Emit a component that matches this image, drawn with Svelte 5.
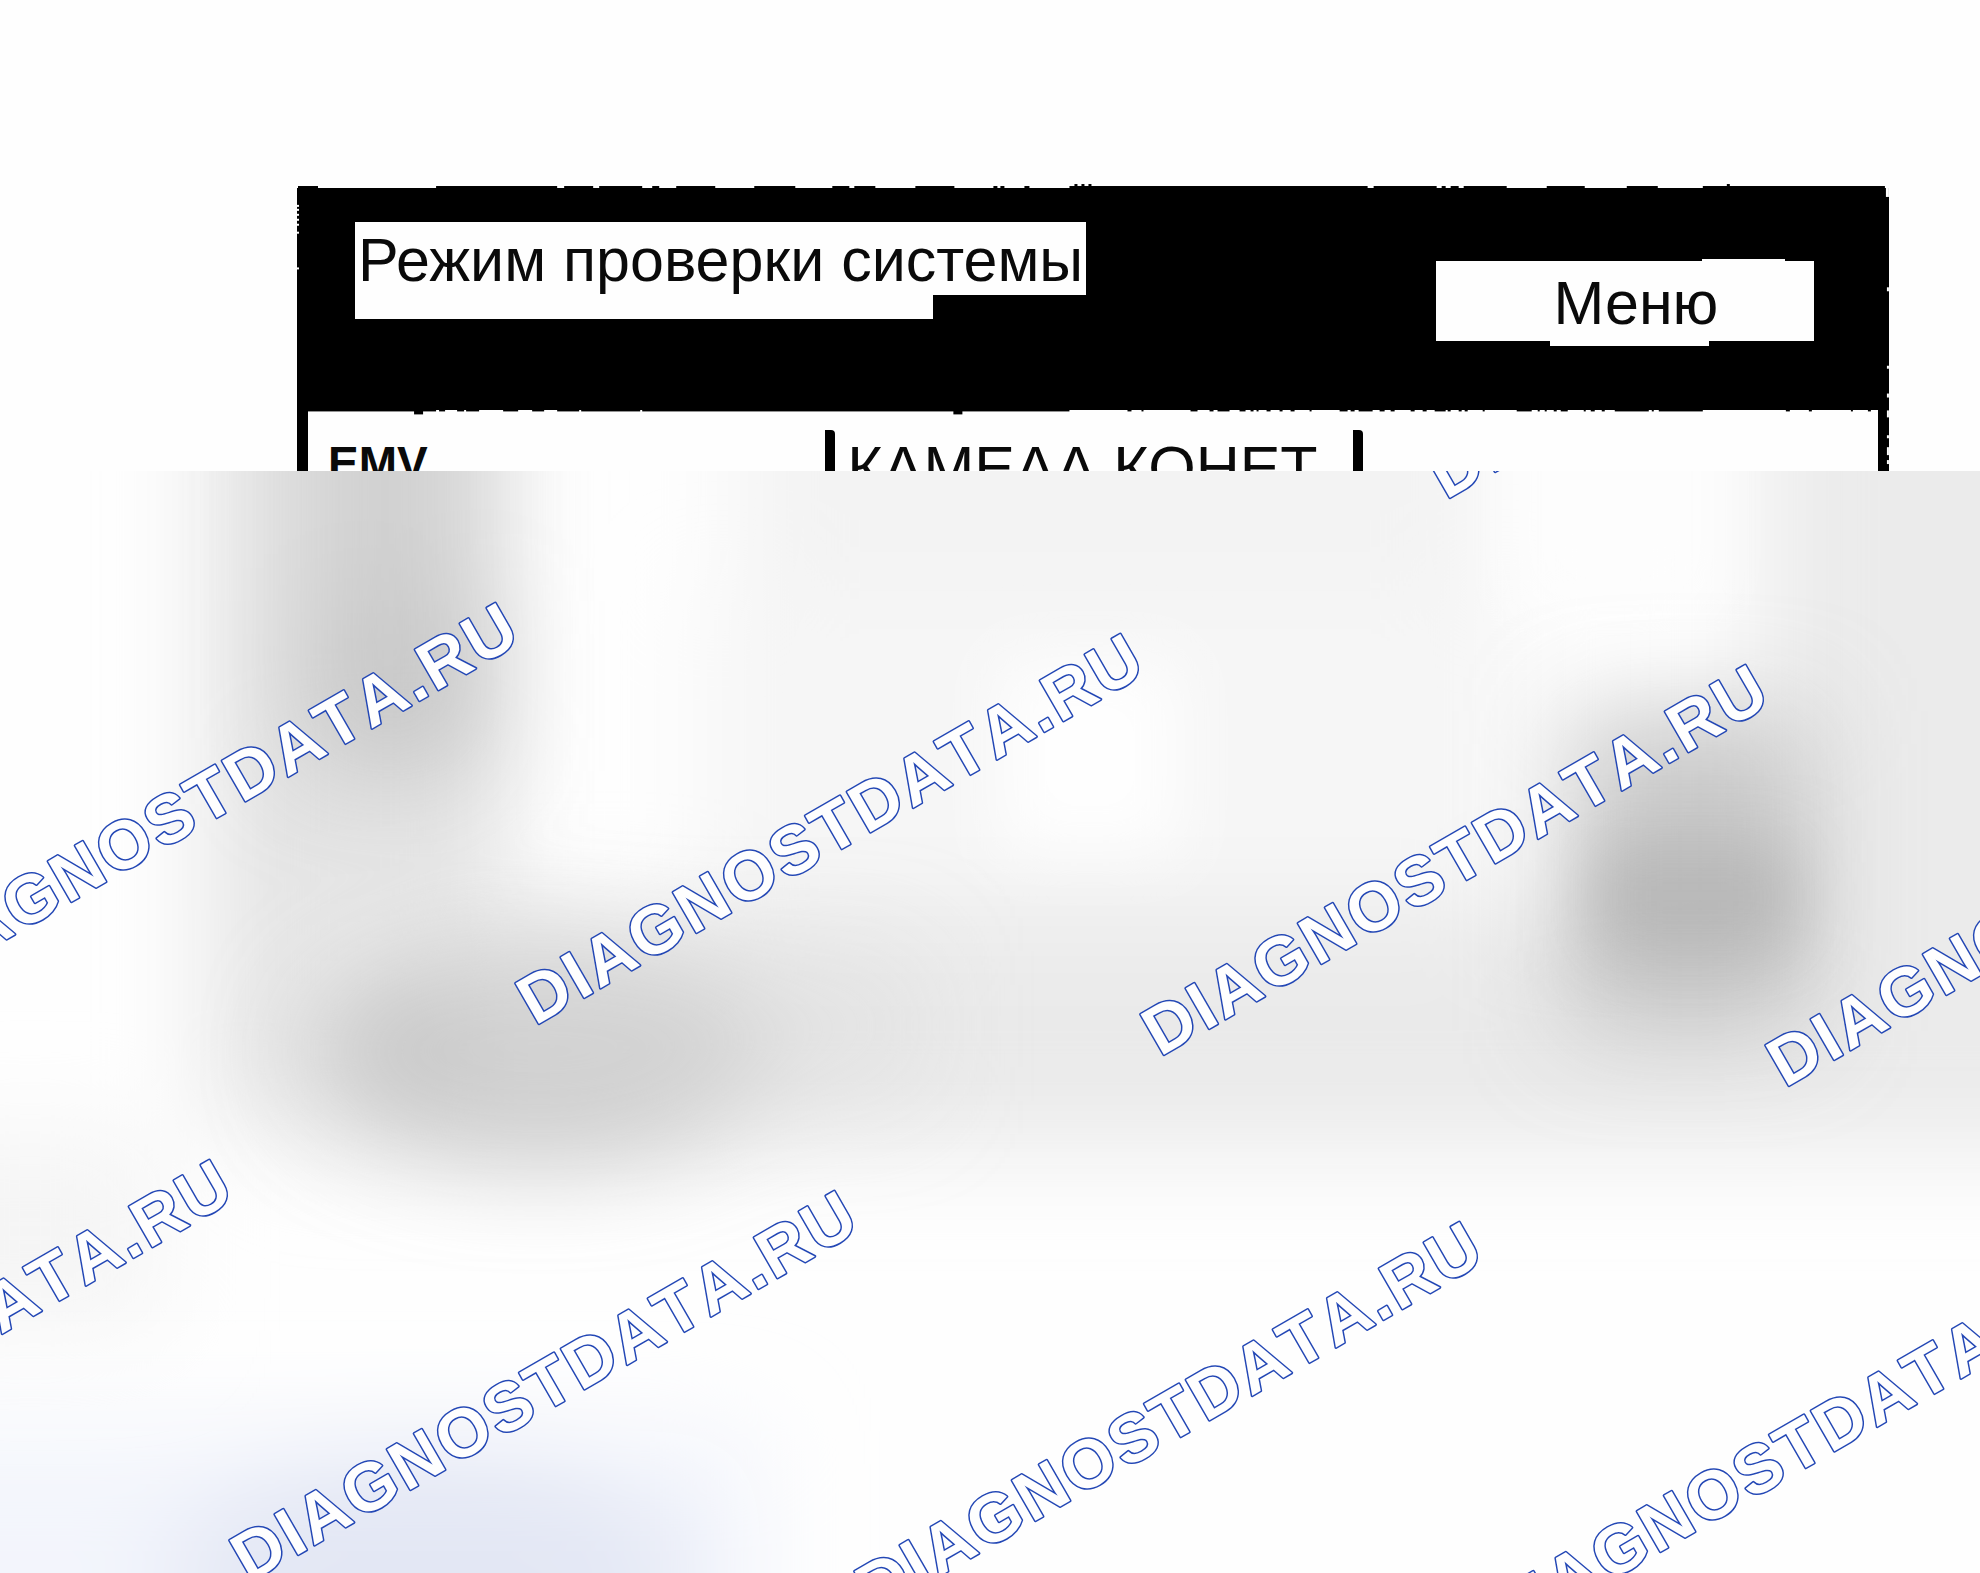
<script>
	const brand = 'DIAGNOSTDATA.RU';

	// [x, width] of the dark ticks on the panel edges, in panel units (1591 wide)
	const topTicks = [
		[1, 20], [139, 121], [267, 29], [302, 43], [355, 7], [379, 39], [457, 41], [535, 17],
		[557, 21], [618, 39], [696, 4], [703, 4], [727, 5], [772, 298], [1076, 63], [1144, 4],
		[1153, 8], [1166, 43], [1249, 38], [1329, 31], [1405, 182]
	];
	const spikes = [777, 784, 791, 1429];
	const bottomTicks = [
		[10, 129], [142, 6], [160, 7], [169, 13], [206, 15], [235, 12], [260, 22], [284, 59],
		[345, 427], [830, 4], [844, 2], [893, 7], [912, 4], [920, 12], [942, 6], [953, 3],
		[959, 2], [969, 4], [982, 3], [993, 4], [1012, 2], [1042, 8], [1053, 4], [1061, 14],
		[1082, 5], [1093, 4], [1113, 4], [1125, 4], [1137, 11], [1150, 3], [1161, 3], [1167, 3],
		[1185, 2], [1219, 15], [1240, 2], [1247, 2], [1256, 3], [1263, 7], [1286, 2], [1293, 4],
		[1304, 3], [1317, 34], [1354, 2], [1361, 44], [1488, 4], [1511, 3], [1553, 2], [1570, 3]
	];
	const leftChips = [17, 21, 26, 31, 36, 44, 80];
	const rightChips = [
		[100, 4], [179, 3], [207, 4], [224, 7], [249, 3], [261, 8], [274, 4]
	];

	// watermark grid: each row steps left and down, each column right and slightly down
	const marks = [];
	for (let row = -1; row <= 1; row++) {
		for (let col = -2; col <= 3; col++) {
			const x = 535 + col * 625 - row * 286;
			const y = 555 + col * 31 + row * 557;
			// skip the ones that never reach the visible area
			if (x > -560 && x < 1980 && y > 0) marks.push({ x, y });
		}
	}
</script>

<main>
	<section class="panel">
		<header>
			<h1>Режим проверки системы</h1>
			<button type="button">Меню</button>
		</header>
		<div class="columns">
			<div class="cell code">EMV</div>
			<div class="cell">КАМЕАА КОНЕТ</div>
			<div class="cell last"></div>
		</div>
		<svg class="edges" viewBox="0 0 1591 285" preserveAspectRatio="none" aria-hidden="true">
			{#each topTicks as [x, w]}
				<rect {x} y="-2" width={w} height="4" />
			{/each}
			{#each spikes as x}
				<rect {x} y="-4" width="3" height="6" />
			{/each}
			{#each bottomTicks as [x, w]}
				<rect {x} y="221" width={w} height="4" />
			{/each}
			<rect x="117" y="221" width="9" height="7" />
			<rect x="656" y="221" width="9" height="7" />
			{#each leftChips as y}
				<rect class="chip" x="0" {y} width="2" height="2" />
			{/each}
			{#each rightChips as [y, h]}
				<rect class="chip" x="1589" {y} width="2" height={h} />
			{/each}
			<rect class="chip" x="1588" y="-2" width="3" height="11" />
		</svg>
	</section>

	<section class="cover">
		<svg class="haze" viewBox="0 0 1980 1102" preserveAspectRatio="none" aria-hidden="true">
			<defs>
				<filter id="soft" x="-60%" y="-60%" width="220%" height="220%">
					<feGaussianBlur stdDeviation="50" />
				</filter>
				<filter id="mid" x="-60%" y="-60%" width="220%" height="220%">
					<feGaussianBlur stdDeviation="32" />
				</filter>
			</defs>
			<rect width="1980" height="1102" fill="#fefefe" />
			<g filter="url(#soft)">
				<rect x="740" y="-200" width="750" height="350" fill="#f3f3f3" />
				<rect x="700" y="120" width="820" height="320" fill="#f6f6f6" />
				<rect x="210" y="-200" width="290" height="850" fill="#e4e4e4" />
				<rect x="280" y="440" width="1900" height="240" fill="#eaeaea" />
				<rect x="1760" y="-200" width="400" height="830" fill="#ebebeb" />
				<rect x="-100" y="660" width="260" height="200" fill="#f5f5f5" />
			</g>
			<g filter="url(#mid)">
				<rect x="1000" y="190" width="180" height="190" fill="#fefefe" />
				<rect x="1520" y="-100" width="190" height="240" fill="#fdfdfd" />
			</g>
			<g filter="url(#soft)">
				<rect x="300" y="-200" width="170" height="500" fill="#d0d0d0" />
				<rect x="310" y="130" width="180" height="170" fill="#c0c0c0" opacity="0.5" />
				<ellipse cx="540" cy="580" rx="230" ry="105" fill="#c8c8c8" />
				<rect x="460" y="480" width="460" height="150" fill="#dddddd" opacity="0.5" />
				<rect x="1570" y="240" width="240" height="320" fill="#b8b8b8" opacity="0.75" />
			</g>
			<g filter="url(#mid)">
				<rect x="1590" y="370" width="210" height="110" fill="#a8a8a8" opacity="0.5" />
			</g>
			<g filter="url(#soft)">
				<rect x="-200" y="960" width="960" height="400" fill="#f3f5fc" />
				<ellipse cx="430" cy="1110" rx="260" ry="130" fill="#e3e7f4" />
			</g>
		</svg>
		<svg class="marks">
			{#each marks as mark}
				<text transform="translate({mark.x} {mark.y}) rotate(-30)">{brand}</text>
			{/each}
		</svg>
	</section>
</main>

<style>
	:global(body) {
		margin: 0;
		background: #fefefe;
	}

	main {
		min-height: 100vh;
		display: flex;
		flex-direction: column;
		box-sizing: border-box;
		padding-top: 188px;
		overflow: hidden;
		font-family: "Liberation Sans", Arial, sans-serif;
		font-size: 61px;
		line-height: 61px;
		color: #0a0a0a;
	}

	.panel {
		position: relative;
		margin: 0 4.6% 0 15%;
	}

	.edges {
		position: absolute;
		inset: 0;
		width: 100%;
		height: 100%;
		overflow: visible;
		pointer-events: none;
	}
	.edges .chip {
		fill: #fefefe;
	}

	header {
		display: flex;
		justify-content: space-between;
		align-items: flex-start;
		background: #000;
		height: 222px;
		box-sizing: border-box;
		padding: 34px 75px 0 58px;
	}

	h1 {
		position: relative;
		margin: 0;
		padding: 8px 3px 4px;
		font-size: 61px;
		font-weight: normal;
		background: #fefefe;
	}
	h1::after {
		content: "";
		position: absolute;
		left: 0;
		top: 100%;
		width: 79%;
		height: 24px;
		background: #fefefe;
	}

	button {
		position: relative;
		width: 378px;
		height: 80px;
		margin-top: 39px;
		padding: 4px 0 0 22px;
		border: 0;
		background: #fefefe;
		color: inherit;
		font: inherit;
	}
	button::before,
	button::after {
		content: "";
		position: absolute;
		background: #fefefe;
	}
	button::before {
		top: -2px;
		right: 29px;
		width: 83px;
		height: 2px;
	}
	button::after {
		bottom: -5px;
		left: 114px;
		width: 159px;
		height: 5px;
	}

	.columns {
		display: grid;
		grid-template-columns: 527fr 527fr 515fr;
		height: 61px;
		overflow: hidden;
		border: solid #000;
		border-width: 0 11px;
		background: #fefefe;
	}

	.cell {
		margin-top: 20px;
		padding: 8px 0 0 12px;
		border-right: 10px solid #000;
		border-top-right-radius: 4px;
		white-space: nowrap;
	}
	.cell.last {
		border: 0;
	}
	.code {
		padding: 3px 0 0 20px;
		font-weight: bold;
		font-size: 46px;
	}

	.cover {
		position: relative;
		flex: 1;
		overflow: hidden;
	}
	.haze,
	.marks {
		position: absolute;
		inset: 0;
		width: 100%;
		height: 100%;
	}
	.marks text {
		font-size: 68px;
		font-weight: bold;
		font-kerning: none;
		letter-spacing: 3px;
		fill: #fefefe;
		stroke: #2347b5;
		stroke-width: 3px;
		stroke-linejoin: round;
		paint-order: stroke;
	}
</style>
